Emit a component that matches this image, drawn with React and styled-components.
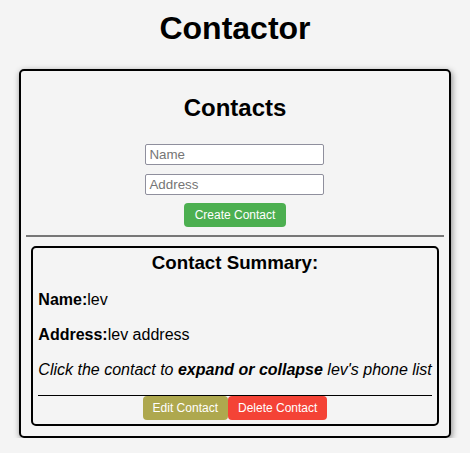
import React from "react";
import styled, { createGlobalStyle } from "styled-components";

const GlobalStyle = createGlobalStyle`
  html, body {
    margin: 0;
    padding: 0;
    background: #f4f4f4;
    font-family: "Liberation Sans", Arial, sans-serif;
    color: #000;
  }
`;

const Page = styled.div`
  padding: 10px 8px 0;
`;

const Title = styled.h1`
  margin: 0 0 22px;
  font-size: 32px;
  font-weight: bold;
  text-align: center;
`;

const Card = styled.div`
  box-sizing: border-box;
  width: 95%;
  margin: 0 auto;
  padding: 3px 5px 0;
  border: 2px solid #000;
  border-radius: 5px;
  box-shadow: 1px 2px 6px rgba(0, 0, 0, 0.45);
  display: flow-root;
`;

const Heading = styled.h2`
  margin: 20px 0 22px;
  font-size: 24px;
  font-weight: bold;
  text-align: center;
`;

const Form = styled.form`
  display: flex;
  flex-direction: column;
  align-items: center;
  gap: 9px;
`;

const Field = styled.input`
  box-sizing: border-box;
  width: 179px;
  height: 21px;
  padding: 1px 3px;
  border: 1px solid #8f8f9d;
  border-radius: 2px;
  background: #fff;
  font-family: "Liberation Sans", Arial, sans-serif;
  font-size: 13.33px;
  color: #000;
  outline: none;
  &::placeholder {
    color: #757575;
  }
`;

const Button = styled.button`
  height: 24px;
  padding: 0 10px;
  border: none;
  border-radius: 4px;
  background: ${(p) => p.$bg};
  color: #fff;
  font-family: "Liberation Sans", Arial, sans-serif;
  font-size: 12px;
  cursor: pointer;
`;

const CreateButton = styled(Button)`
  margin-top: -1px;
  padding: 0 11px;
`;

const Divider = styled.hr`
  margin: 8px 0 0;
  height: 0;
  border: none;
  border-top: 2px solid #777;
`;

const Summary = styled.div`
  margin: 9px 5px 10px;
  padding: 4px 5px 4px;
  border: 2px solid #000;
  border-radius: 5px;
`;

const SummaryTitle = styled.h3`
  margin: 0;
  font-size: 18.72px;
  font-weight: bold;
  text-align: center;
`;

const Line = styled.p`
  margin: 16px 0;
  font-size: 16px;
  line-height: 19px;
  font-style: ${(p) => (p.$italic ? "italic" : "normal")};
  white-space: nowrap;
`;

const Rule = styled.hr`
  margin: 16px 0 0;
  height: 0;
  border: none;
  border-top: 1px solid #000;
`;

const Actions = styled.div`
  display: flex;
  justify-content: center;
`;

export default function App() {
  return (
    <>
      <GlobalStyle />
      <Page>
        <Title>Contactor</Title>
        <Card>
          <Heading>Contacts</Heading>
          <Form onSubmit={(e) => e.preventDefault()}>
            <Field placeholder="Name" />
            <Field placeholder="Address" />
            <CreateButton type="submit" $bg="#4caf50">
              Create Contact
            </CreateButton>
          </Form>
          <Divider />
          <Summary>
            <SummaryTitle>Contact Summary:</SummaryTitle>
            <Line>
              <b>Name:</b>lev
            </Line>
            <Line>
              <b>Address:</b>lev address
            </Line>
            <Line $italic>
              Click the contact to <b>expand or collapse</b> lev's phone list
            </Line>
            <Rule />
            <Actions>
              <Button $bg="#aea84e">Edit Contact</Button>
              <Button $bg="#f44336">Delete Contact</Button>
            </Actions>
          </Summary>
        </Card>
      </Page>
    </>
  );
}
